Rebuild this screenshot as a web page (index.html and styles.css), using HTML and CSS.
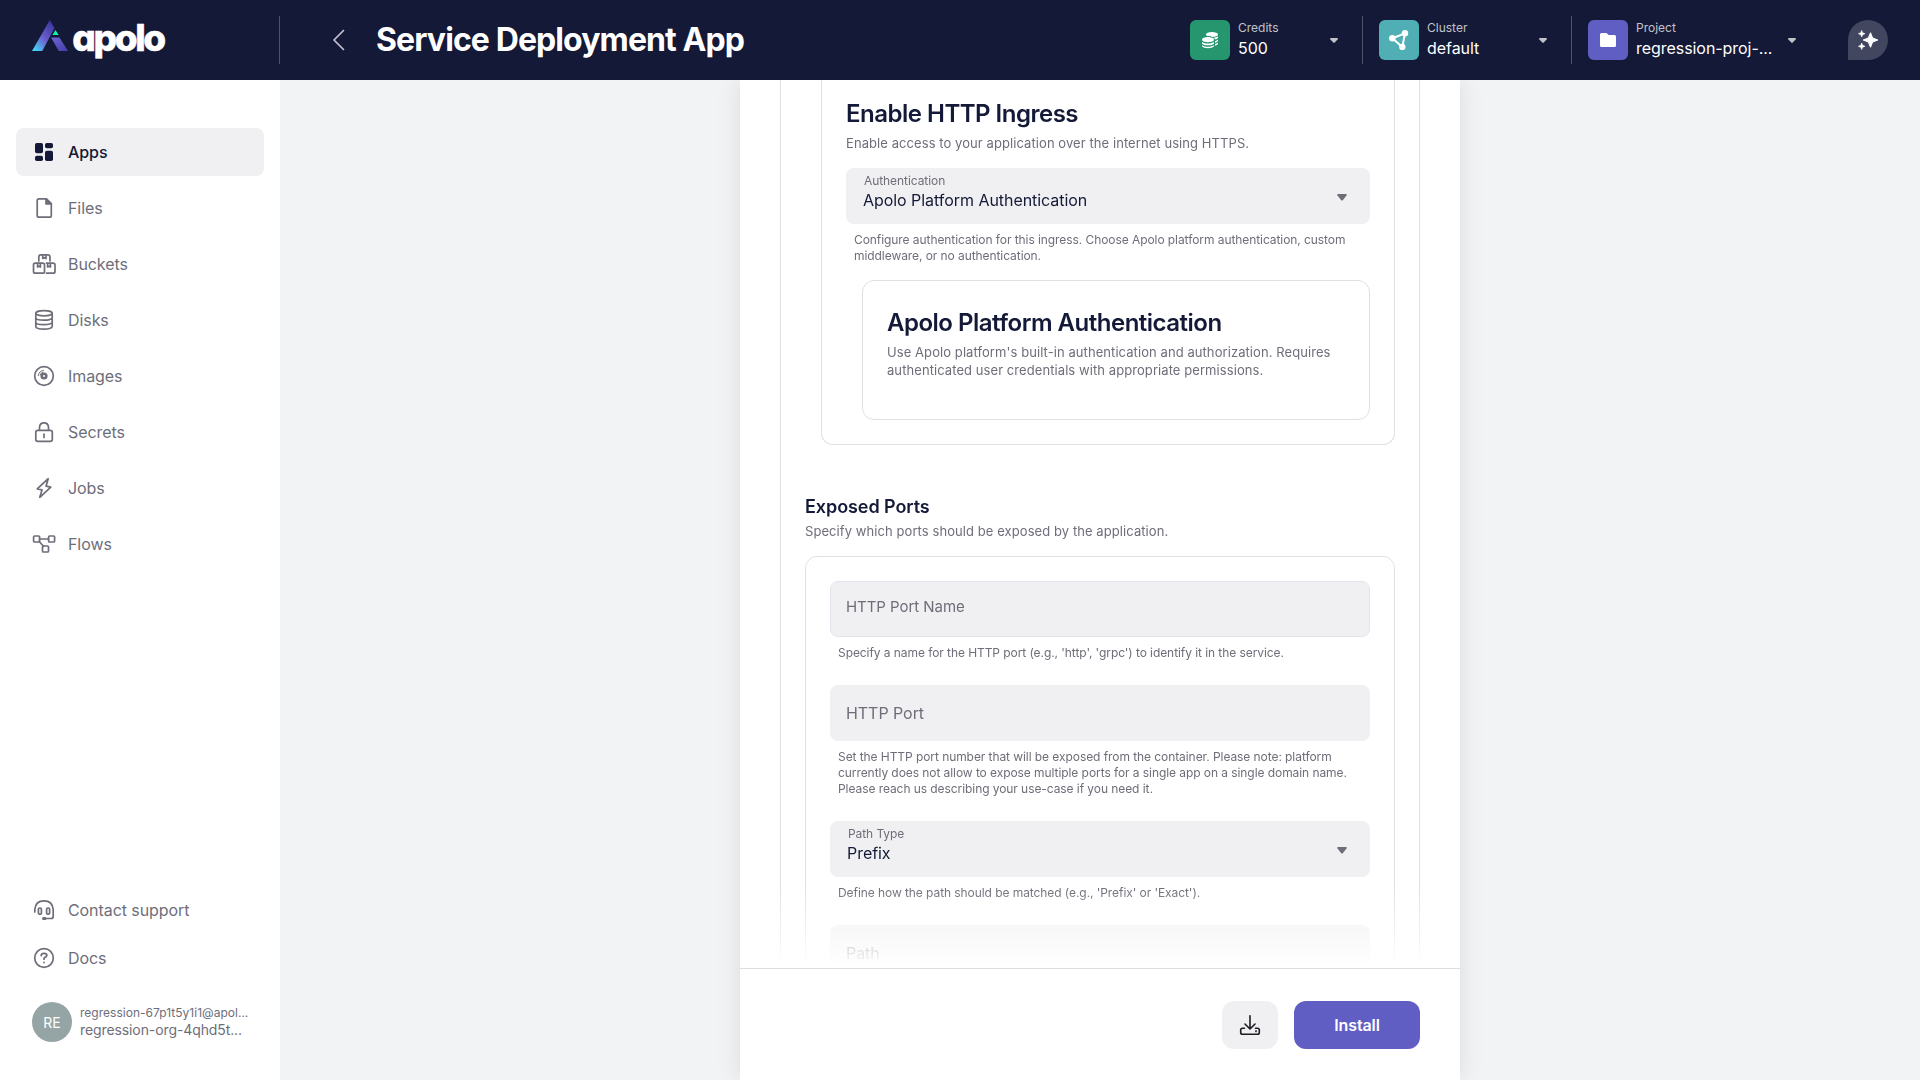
FILE: index.html
```html
<!DOCTYPE html>
<html lang="en">
<head>
<meta charset="utf-8">
<title>Service Deployment App</title>
<link rel="stylesheet" href="styles.css">
</head>
<body>
<div class="app">
  <header class="topbar">
    <div class="brand">
      <svg class="logo" width="138" height="40" viewBox="0 0 138 40">
        <defs>
          <linearGradient id="beam" x1="0" y1="1" x2=".75" y2="0">
            <stop offset="0" stop-color="#3fe6fb"/><stop offset=".5" stop-color="#6a60cf"/><stop offset="1" stop-color="#3c37a0"/>
          </linearGradient>
          <linearGradient id="leg" x1="0" y1="0" x2="1" y2="1">
            <stop offset="0" stop-color="#6c65d4"/><stop offset="1" stop-color="#463fa8"/>
          </linearGradient>
        </defs>
        <path d="M17.800 0L22.500 8L10.300 31H0z" fill="url(#beam)"/>
        <path d="M19 17.500H27.500L36 31H26.800z" fill="url(#leg)"/>
        <path d="M23.500 10L26.700 15H20.400z" fill="#0df5a5"/>
        <text class="wordmark" x="40.200" y="30.800" textLength="94" lengthAdjust="spacing">apolo</text>
      </svg>
    </div>
    <div class="heading">
      <svg width="14" height="22" viewBox="0 0 14 22" fill="none" stroke="#c3c3c9" stroke-width="1.700" stroke-linecap="round" stroke-linejoin="round"><path d="M11.500 1.500L2 11L11.500 20.500"/></svg>
      <h1>Service Deployment App</h1>
    </div>
    <div class="switchers">
      <div class="switcher credits">
        <span class="tile green"><svg width="20" height="20" viewBox="0 0 20 20" fill="#fff"><ellipse cx="12" cy="4.400" rx="6" ry="2.500"/><path d="M12.800 7.900C15.500 7.700 17.300 7.200 18 6.100V7.700C17.600 8.700 16.500 9.300 14.700 9.600zM15 10.900C16.600 10.500 17.600 10 18 9.400V11C17.600 11.900 16.600 12.400 15 12.800zM15 14C16.600 13.600 17.600 13.100 18 12.500V13.800C17.600 14.800 16.600 15.400 15 15.700z"/><ellipse cx="8" cy="9.600" rx="7" ry="3.500" fill="#26966f"/><ellipse cx="8" cy="9.700" rx="6" ry="2.600"/><path d="M2 11.800C3.500 14.200 12.500 14.200 14 11.800V13.400C12.500 16 3.500 16 2 13.400zM2 15C3.500 17.400 12.500 17.400 14 15V16.300C12.500 18.900 3.500 18.900 2 16.300z"/></svg></span>
        <div class="labels"><span class="kind">Credits</span><span class="value">500</span></div>
        <svg class="caret" width="8" height="6" viewBox="0 0 8 6"><path d="M.6 0h6.800q.8.500.2 1.400L4.700 4.600q-.7.600-1.400 0L.4 1.400Q-.2.500.6 0z"/></svg>
      </div>
      <div class="switcher cluster">
        <span class="tile teal"><svg width="20" height="20" viewBox="0 0 20 20" fill="#fff"><path d="M3.500 8.300L16 3.300L13.300 17z" fill="none" stroke="#fff" stroke-width="2"/><circle cx="3.300" cy="8.300" r="3.200"/><circle cx="16" cy="3.200" r="3.200"/><circle cx="13.300" cy="17" r="3.200"/></svg></span>
        <div class="labels"><span class="kind">Cluster</span><span class="value">default</span></div>
        <svg class="caret" width="8" height="6" viewBox="0 0 8 6"><path d="M.6 0h6.800q.8.500.2 1.400L4.700 4.600q-.7.600-1.400 0L.4 1.400Q-.2.500.6 0z"/></svg>
      </div>
      <div class="switcher project">
        <span class="tile violet"><svg width="16" height="14" viewBox="0 0 16 14" fill="#fff"><path d="M1.500 0H6.500L8.600 2H14.500Q16 2 16 3.500V12.500Q16 14 14.500 14H1.500Q0 14 0 12.500V1.500Q0 0 1.500 0z"/></svg></span>
        <div class="labels"><span class="kind">Project</span><span class="value">regression-proj-...</span></div>
        <svg class="caret" width="8" height="6" viewBox="0 0 8 6"><path d="M.6 0h6.800q.8.500.2 1.400L4.700 4.600q-.7.600-1.400 0L.4 1.400Q-.2.500.6 0z"/></svg>
      </div>
      <div class="assistant"><svg width="20" height="20" viewBox="0 0 20 20" fill="#fff" stroke="#fff" stroke-linejoin="round"><path d="M12.500 2.700L14.600 7.900L19.800 10L14.600 12.100L12.500 17.300L10.400 12.100L5.200 10L10.400 7.900z"/><path stroke-width=".6" d="M3.700 .4L4.600 2.700L7 3.700L4.600 4.700L3.700 7L2.800 4.700L.4 3.700L2.800 2.700zM3.700 13L4.600 15.300L7 16.300L4.600 17.300L3.700 19.600L2.800 17.300L.4 16.300L2.800 15.300z"/></svg></div>
    </div>
  </header>

  <aside class="sidebar">
    <nav class="menu">
      <a class="item active"><svg class="icon" viewBox="0 0 24 24" fill="currentColor"><rect x="3" y="3" width="8" height="10.200" rx="1.800"/><rect x="13" y="3" width="8" height="5.200" rx="1.800"/><rect x="3" y="15.800" width="8" height="5.200" rx="1.800"/><rect x="13" y="10.800" width="8" height="10.200" rx="1.800"/></svg>Apps</a>
      <a class="item"><svg class="icon line" viewBox="0 0 24 24"><path d="M14.500 2.800H7Q5.200 2.800 5.200 4.600V19.400Q5.200 21.200 7 21.200H17.500Q19.300 21.200 19.300 19.400V7.500z"/><path d="M14 3V7.800H19z" fill="currentColor"/></svg>Files</a>
      <a class="item"><svg class="icon line" viewBox="0 0 24 24"><path d="M6.800 9V5Q6.800 2.800 8.800 2.800H16Q18 2.800 18 5V9M10.800 3V6.500L12.400 5.700L14 6.500V3"/><rect x="1.500" y="11.200" width="11" height="10" rx="1.800"/><path d="M5.600 11.500V15L7 14.200L8.400 15V11.500M14.500 11.200H21Q23 11.200 23 13V19.400Q23 21.200 21 21.200H14.500M15.600 11.500V15L17 14.200L18.400 15V11.500"/></svg>Buckets</a>
      <a class="item"><svg class="icon line" viewBox="0 0 24 24"><ellipse cx="12" cy="5.300" rx="8.200" ry="2.600"/><path d="M3.800 5.300V18.500C3.800 22 20.200 22 20.200 18.500V5.300M3.800 9.700C3.800 13 20.200 13 20.200 9.700M3.800 14.200C3.800 17.400 20.200 17.400 20.200 14.200"/></svg>Disks</a>
      <a class="item"><svg class="icon line" viewBox="0 0 24 24"><circle cx="12" cy="12" r="9.300"/><circle cx="12" cy="12" r="2.300" stroke-width="2.600"/><path stroke-width="1" d="M6.300 11.500Q6.800 7 11.500 6.400M8.200 11Q8.700 8.600 11 8.200"/></svg>Images</a>
      <a class="item"><svg class="icon line" viewBox="0 0 24 24"><rect x="3.800" y="10.300" width="16.500" height="11" rx="2"/><path d="M7.500 10V7.200Q7.700 2.800 12 2.800Q16.300 2.800 16.500 7.200V10M12 14V17.500"/></svg>Secrets</a>
      <a class="item"><svg class="icon line" viewBox="0 0 24 24"><path d="M16.200 2.700L5.200 12.800L10 13.900L7.800 21.300L18.800 11.200L14.100 10.100z"/></svg>Jobs</a>
      <a class="item"><svg class="icon line" viewBox="0 0 24 24"><rect x="1.600" y="4" width="6" height="6" rx="1"/><rect x="16.600" y="4" width="6" height="6" rx="1"/><rect x="10.500" y="14" width="6" height="6" rx="1"/><path d="M7.600 7H16.600M7.200 9.500L11.500 14.300"/></svg>Flows</a>
    </nav>
    <div class="support">
      <a class="item"><svg class="icon line" viewBox="0 0 24 24"><path d="M2.800 14V11.500Q3.500 2.800 12 2.800Q20.500 2.800 21.200 11.500V18.500Q21.200 20.500 19.200 20.500H12.500"/><path stroke-width="3" d="M11.500 20.500H13"/><rect x="6.400" y="10" width="3" height="6.200" rx="1.300"/><rect x="14.600" y="10" width="3" height="6.200" rx="1.300"/></svg>Contact support</a>
      <a class="item"><svg class="icon line" viewBox="0 0 24 24"><circle cx="12" cy="12" r="9.300"/><path stroke-width="1.800" d="M9.200 9.500Q9.300 7.400 12 7.400Q14.800 7.400 14.800 9.300Q14.800 10.700 12.900 11.400Q12 11.800 12 13.200M12 16.300V16.500"/></svg>Docs</a>
    </div>
    <div class="account">
      <span class="avatar">RE</span>
      <div class="who"><span class="mail">regression-67p1t5y1i1@apol...</span><span class="org">regression-org-4qhd5t...</span></div>
    </div>
  </aside>

  <main class="stage">
    <section class="panel">
      <div class="scroll">
        <div class="group">
          <div class="card ingress">
            <h2>Enable HTTP Ingress</h2>
            <p class="desc">Enable access to your application over the internet using HTTPS.</p>
            <div class="field select"><div><span class="float">Authentication</span><span class="chosen">Apolo Platform Authentication</span></div><svg class="drop" width="10" height="7" viewBox="0 0 10 7"><path d="M1 0h8q1.300.4.500 1.500L6 6q-1 1-2 0L.5 1.500Q-.3.400 1 0z"/></svg></div>
            <p class="hint">Configure authentication for this ingress. Choose Apolo platform authentication, custom middleware, or no authentication.</p>
            <div class="card nested">
              <h2>Apolo Platform Authentication</h2>
              <p class="desc">Use Apolo platform's built-in authentication and authorization. Requires authenticated user credentials with appropriate permissions.</p>
            </div>
          </div>
          <h3>Exposed Ports</h3>
          <p class="desc">Specify which ports should be exposed by the application.</p>
          <div class="card ports">
            <div class="field outlined"><span class="placeholder">HTTP Port Name</span></div>
            <p class="hint">Specify a name for the HTTP port (e.g., 'http', 'grpc') to identify it in the service.</p>
            <div class="field"><span class="placeholder">HTTP Port</span></div>
            <p class="hint">Set the HTTP port number that will be exposed from the container. Please note: platform currently does not allow to expose multiple ports for a single app on a single domain name. Please reach us describing your use-case if you need it.</p>
            <div class="field select"><div><span class="float">Path Type</span><span class="chosen">Prefix</span></div><svg class="drop" width="10" height="7" viewBox="0 0 10 7"><path d="M1 0h8q1.300.4.500 1.500L6 6q-1 1-2 0L.5 1.500Q-.3.400 1 0z"/></svg></div>
            <p class="hint">Define how the path should be matched (e.g., 'Prefix' or 'Exact').</p>
            <div class="field"><span class="placeholder">Path</span></div>
          </div>
        </div>
      </div>
      <footer class="actions">
        <button class="download" aria-label="Download"><svg width="24" height="24" viewBox="0 0 24 24" fill="none" stroke="#1c1c22" stroke-width="1.600" stroke-linecap="round" stroke-linejoin="round"><path d="M12 2.800V15.500M7 11L12 16L17 11M6.500 15.300H4.500Q2.700 15.300 2.700 17.100V19.400Q2.700 21.200 4.500 21.200H19.500Q21.300 21.200 21.300 19.400V17.100Q21.300 15.300 19.500 15.300H17.500M18 17.900V18.600"/></svg></button>
        <button class="install">Install</button>
      </footer>
    </section>
  </main>
</div>
</body>
</html>
```
FILE: styles.css
```css
* { box-sizing: border-box; margin: 0; padding: 0; }
body { font-family: Inter, sans-serif; color: #131936; background: #fff; }
.app {
  display: grid;
  grid-template: 80px 1000px / 280px 1fr;
  height: 1080px;
  overflow: hidden;
}
.topbar {
  grid-column: 1 / -1;
  display: flex;
  align-items: center;
  background: #131936;
  color: #fff;
  z-index: 1;
}
.brand { width: 280px; height: 48px; padding-left: 32px; border-right: 1px solid #4f536a; }
.logo { display: block; margin-top: 4px; overflow: visible; }
.wordmark { font: 800 37px Inter, sans-serif; font-feature-settings: "cv11"; fill: #fff; stroke: #fff; stroke-width: .5px; }
.heading { flex: 1; display: flex; align-items: center; gap: 30px; padding-left: 52px; }
h1 { font-size: 32px; line-height: 40px; font-weight: 700; white-space: nowrap; letter-spacing: -.9px; }
.switchers { display: flex; align-items: center; padding-right: 32px; }
.switcher { display: flex; align-items: center; height: 48px; gap: 8px; border-right: 1px solid #4f536a; padding: 0 24px 0 16px; }
.switcher.credits { width: 189px; }
.switcher.cluster { width: 209px; }
.switcher.project { width: 276px; border: 0; padding-right: 52px; }
.tile { width: 40px; height: 40px; border-radius: 6px; display: flex; align-items: center; justify-content: center; flex: none; }
.green { background: #26966f; }
.teal { background: #50afb4; }
.violet { background: #605dc3; }
.labels { display: flex; flex-direction: column; flex: 1; white-space: nowrap; }
.kind { font-size: 12px; line-height: 16px; color: #c3c3c9; }
.value { font-size: 16px; line-height: 24px; letter-spacing: -.05px; }
.caret { fill: #c3c3c9; flex: none; margin-top: 2px; }
.assistant { width: 40px; height: 40px; border-radius: 20px 20px 20px 0; background: #42465e; display: flex; align-items: center; justify-content: center; }

.sidebar { display: flex; flex-direction: column; padding: 48px 16px 36px; background: #fff; }
.menu { display: flex; flex-direction: column; gap: 8px; flex: 1; }
.item { display: flex; align-items: center; gap: 12px; height: 48px; padding-left: 16px; font-size: 16px; letter-spacing: -.08px; color: #6e6e7a; border-radius: 8px; }
.item.active { background: #f0f0f2; color: #131936; font-weight: 500; }
.icon { width: 24px; height: 24px; flex: none; }
.line { fill: none; stroke: currentColor; stroke-width: 1.700; stroke-linecap: round; stroke-linejoin: round; }
.account { display: flex; align-items: center; gap: 8px; padding: 20px 0 2px 16px; }
.avatar { width: 40px; height: 40px; border-radius: 50%; background: #95a5a5; color: #fff; display: flex; align-items: center; justify-content: center; font-size: 14px; }
.who { display: flex; flex-direction: column; white-space: nowrap; color: #6e6e7a; }
.mail { font-size: 12px; line-height: 16px; letter-spacing: .02px; }
.org { font-size: 14px; line-height: 18px; letter-spacing: -.1px; }

.stage { background: #f2f3f5; display: flex; justify-content: center; }
.panel { width: 720px; background: #fff; display: flex; flex-direction: column; box-shadow: 0 0 24px rgba(0, 0, 0, .1); }
.scroll { height: 888px; overflow: hidden; padding: 0 40px; -webkit-mask-image: linear-gradient(#000 808px, transparent 887px); mask-image: linear-gradient(#000 808px, transparent 887px); }
.group { border: 1px solid #e0e0e3; border-width: 0 1px; padding: 0 24px; height: 1000px; }
.card { border: 1px solid #e0e0e3; border-radius: 12px; }
.ingress { margin-left: 16px; height: 365px; padding: 18px 24px 0; border-top: 0; border-radius: 0 0 12px 12px; }
h2 { font-size: 24px; line-height: 32px; font-weight: 600; letter-spacing: -.5px; }
h3 { font-size: 18px; line-height: 24px; font-weight: 600; margin-top: 50px; letter-spacing: -.08px; }
.desc { font-size: 13px; line-height: 18px; color: #6e6e7a; margin-top: 4px; letter-spacing: .075px; }
h3 + .desc { margin-top: 3px; }
.ingress > .field { margin-top: 16px; }
.nested { margin: 16px 0 0 16px; height: 140px; padding: 26px 24px; }
.field { height: 56px; border-radius: 8px; background: #f0f0f2; padding: 0 16px; display: flex; align-items: center; }
.outlined { border: 1px solid #e3e3ec; padding: 0 15px; }
.placeholder { font-size: 16px; color: #6e6e7a; letter-spacing: -.05px; }
.outlined .placeholder { font-size: 15px; margin-bottom: 6px; }
.select { justify-content: space-between; padding: 0 23px 0 17px; }
.select > div { display: flex; flex-direction: column; align-self: flex-start; padding-top: 5px; }
.float { font-size: 12px; line-height: 16px; color: #6e6e7a; padding-left: 1px; letter-spacing: -.07px; }
.chosen { font-size: 16px; line-height: 22px; letter-spacing: -.05px; }
.drop { fill: #6e6e7a; margin-top: 2px; }
.hint { font-size: 12px; line-height: 16px; color: #6e6e7a; padding: 8px 0 0 8px; letter-spacing: -.07px; }
.ports { margin-top: 16px; height: 500px; padding: 24px; }
.ports .hint { margin-bottom: 24px; }

.actions { flex: 1; border-top: 1px solid #dedee2; padding: 32px 40px 0; display: flex; justify-content: flex-end; gap: 16px; }
.actions button { height: 48px; border: 0; border-radius: 12px; font: 600 16px Inter, sans-serif; letter-spacing: -.1px; display: flex; align-items: center; justify-content: center; }
.download { width: 56px; background: #f0f0f2; }
.actions .install { width: 126px; background: #605dc3; color: #fff; }
```
